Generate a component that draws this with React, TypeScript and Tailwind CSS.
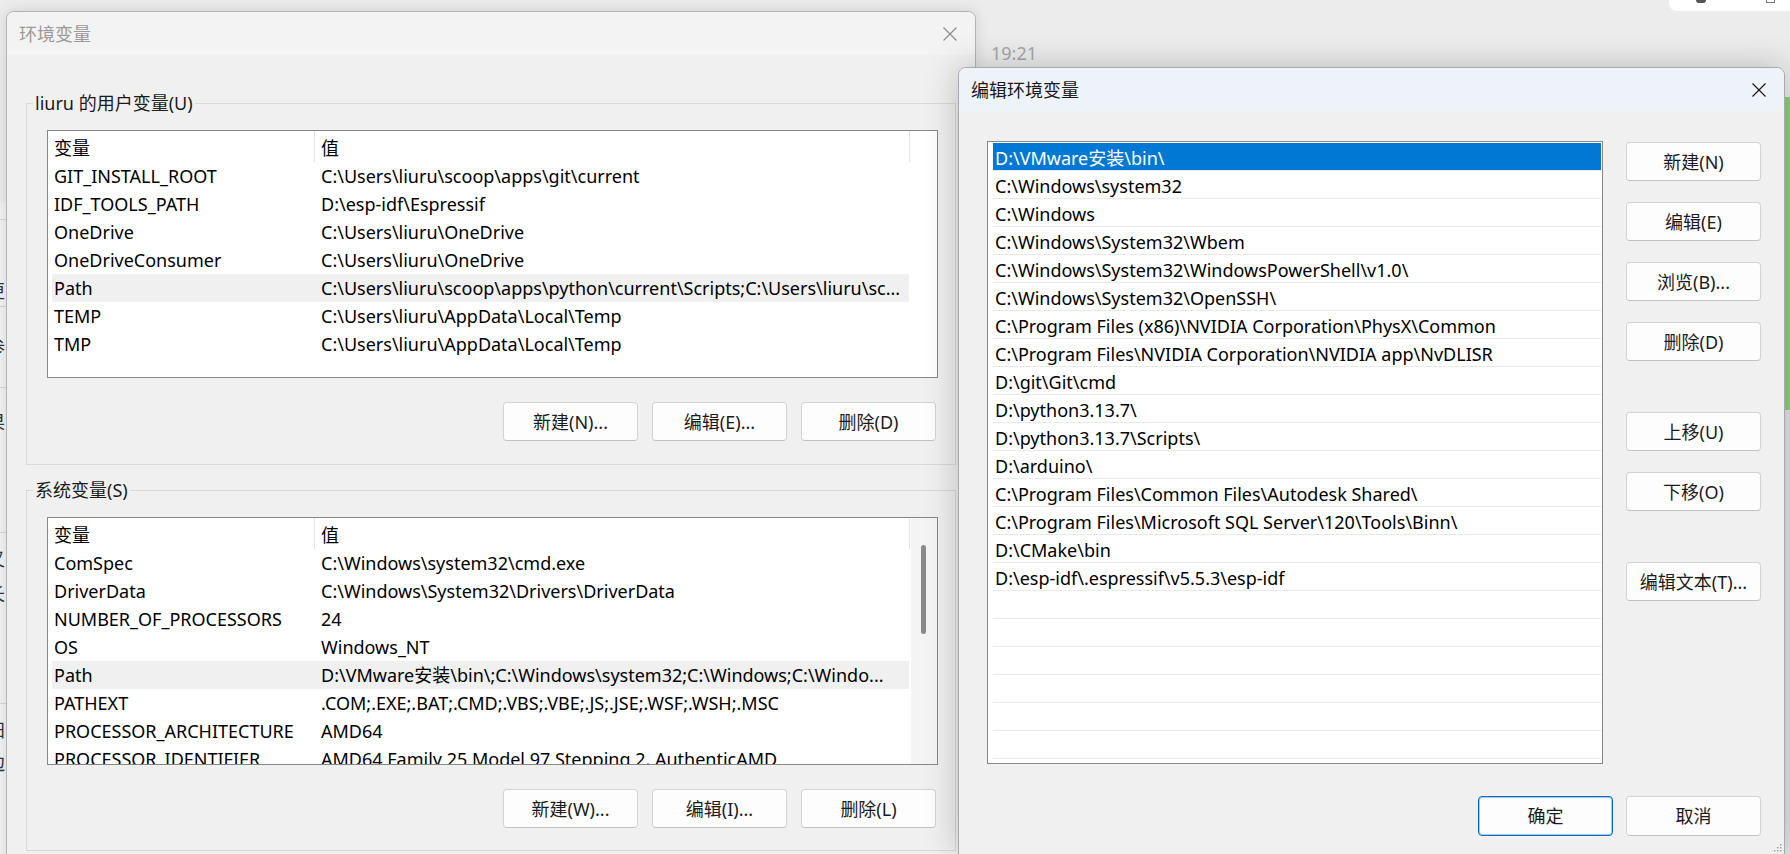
import clsx from 'clsx';
import type { ReactNode } from 'react';

type Row = [string, string];

const userVars: Row[] = [
  ['GIT_INSTALL_ROOT', 'C:\\Users\\liuru\\scoop\\apps\\git\\current'],
  ['IDF_TOOLS_PATH', 'D:\\esp-idf\\Espressif'],
  ['OneDrive', 'C:\\Users\\liuru\\OneDrive'],
  ['OneDriveConsumer', 'C:\\Users\\liuru\\OneDrive'],
  ['Path', 'C:\\Users\\liuru\\scoop\\apps\\python\\current\\Scripts;C:\\Users\\liuru\\sc...'],
  ['TEMP', 'C:\\Users\\liuru\\AppData\\Local\\Temp'],
  ['TMP', 'C:\\Users\\liuru\\AppData\\Local\\Temp'],
];

const sysVars: Row[] = [
  ['ComSpec', 'C:\\Windows\\system32\\cmd.exe'],
  ['DriverData', 'C:\\Windows\\System32\\Drivers\\DriverData'],
  ['NUMBER_OF_PROCESSORS', '24'],
  ['OS', 'Windows_NT'],
  ['Path', 'D:\\VMware安装\\bin\\;C:\\Windows\\system32;C:\\Windows;C:\\Windo...'],
  ['PATHEXT', '.COM;.EXE;.BAT;.CMD;.VBS;.VBE;.JS;.JSE;.WSF;.WSH;.MSC'],
  ['PROCESSOR_ARCHITECTURE', 'AMD64'],
  ['PROCESSOR_IDENTIFIER', 'AMD64 Family 25 Model 97 Stepping 2, AuthenticAMD'],
];

const pathEntries = [
  'D:\\VMware安装\\bin\\',
  'C:\\Windows\\system32',
  'C:\\Windows',
  'C:\\Windows\\System32\\Wbem',
  'C:\\Windows\\System32\\WindowsPowerShell\\v1.0\\',
  'C:\\Windows\\System32\\OpenSSH\\',
  'C:\\Program Files (x86)\\NVIDIA Corporation\\PhysX\\Common',
  'C:\\Program Files\\NVIDIA Corporation\\NVIDIA app\\NvDLISR',
  'D:\\git\\Git\\cmd',
  'D:\\python3.13.7\\',
  'D:\\python3.13.7\\Scripts\\',
  'D:\\arduino\\',
  'C:\\Program Files\\Common Files\\Autodesk Shared\\',
  'C:\\Program Files\\Microsoft SQL Server\\120\\Tools\\Binn\\',
  'D:\\CMake\\bin',
  'D:\\esp-idf\\.espressif\\v5.5.3\\esp-idf',
  '', '', '', '', '', '',
];

// bits of the window lying behind, only its right edge shows
const behindGlyphs = [
  { ch: '更', top: 'top-[75px]' },
  { ch: '参', top: 'top-[131px]' },
  { ch: '果', top: 'top-[206px]' },
  { ch: '又', top: 'top-[343px]' },
  { ch: '长', top: 'top-[378px]' },
  { ch: '阳', top: 'top-[514px]' },
  { ch: '边', top: 'top-[547px]' },
];

function CloseIcon({ className }: { className?: string }) {
  return (
    <svg viewBox="0 0 16 16" className={clsx('h-[16px] w-[16px] shrink-0', className)} fill="none" stroke="currentColor" strokeWidth={1.2}>
      <path d="M1.5 1.5l13 13M14.5 1.5l-13 13" />
    </svg>
  );
}

function Button({ children, primary, className }: { children: ReactNode; primary?: boolean; className?: string }) {
  return (
    <button
      type="button"
      className={clsx(
        'flex h-[39px] w-[135px] shrink-0 items-center justify-center rounded-[4px] border bg-[#fdfdfd] leading-none text-[#1b1b1b]',
        primary ? 'border-[#0067c0] shadow-[inset_0_0_0_1px_rgba(0,103,192,0.35)]' : 'border-[#d3d3d3] border-b-[#c2c2c2]',
        className,
      )}
    >
      {children}
    </button>
  );
}

function VarList({ rows, selected, scrollbar }: { rows: Row[]; selected: string; scrollbar?: boolean }) {
  return (
    <div className="flex h-[248px] w-[891px] overflow-hidden border border-[#878787] bg-white">
      <div className="min-w-0 flex-1">
        <div className="flex h-[31px] pl-[4px]">
          <div className="w-[262px] shrink-0 pl-[2px] pt-[3px] leading-[28px]">变量</div>
          <div className="w-[595px] shrink-0 border-l border-[#e3e3e3] pl-[6px] pt-[3px] leading-[28px]">值</div>
          <div className="flex-1 border-l border-[#e3e3e3]" />
        </div>
        {rows.map(([name, value]) => (
          <div key={name} className={clsx('ml-[4px] flex h-[28px] w-[857px] leading-[28px]', name === selected && 'bg-[#f0f0f0]')}>
            <div className="w-[262px] shrink-0 overflow-hidden whitespace-nowrap pl-[2px]">{name}</div>
            <div className="w-[595px] shrink-0 overflow-hidden whitespace-nowrap pl-[7px]">{value}</div>
          </div>
        ))}
      </div>
      {scrollbar && (
        <div className="w-[26px] shrink-0 bg-[#f4f4f4]">
          <div className="ml-[10px] mt-[27px] h-[89px] w-[5px] rounded-full bg-[#8a8a8a]" />
        </div>
      )}
    </div>
  );
}

function GroupBox({ label, className, children }: { label: string; className?: string; children: ReactNode }) {
  return (
    <fieldset className={clsx('border border-[#d9d9d9] pl-[6px] pt-[14px]', className)}>
      <legend className="px-[2px] leading-[26px] text-[#1b1b1b]">{label}</legend>
      <div className="ml-[14px]">{children}</div>
    </fieldset>
  );
}

function ButtonRow({ labels }: { labels: string[] }) {
  return (
    <div className="mt-[24px] flex w-[891px] justify-end gap-[14px] pr-[2px]">
      {labels.map((l) => (
        <Button key={l}>{l}</Button>
      ))}
    </div>
  );
}

export default function App() {
  return (
    <div className="relative h-[854px] w-[1790px] overflow-hidden bg-[#ececec] font-['Noto_Sans','Noto_Sans_CJK_SC',sans-serif] text-[18px] text-black">
      {/* window behind on the left edge */}
      <div className="absolute left-0 top-[203px] h-[651px] w-[6px] overflow-hidden bg-[#f2f2f2]">
        <div className="h-[17px] border-b border-[#d6d6d6]" />
        <div className="mt-[86px] border-b border-[#d6d6d6]" />
        <div className="mt-[80px] border-b border-[#d6d6d6]" />
        <div className="mt-[144px] border-b border-[#d6d6d6]" />
        <div className="mt-[170px] border-b border-[#d6d6d6]" />
        {behindGlyphs.map((g) => (
          <span key={g.ch} className={clsx('absolute left-[-13px] leading-[26px] text-[#333]', g.top)}>{g.ch}</span>
        ))}
      </div>

      {/* desktop bits */}
      <span className="absolute left-[991px] top-[40px] leading-[26px] text-[#a6a6a6]">19:21</span>
      <div className="absolute right-0 top-0 flex h-[11px] w-[121px] items-start gap-[60px] rounded-bl-[8px] bg-white pl-[27px]">
        <div className="h-[3px] w-[10px] rounded-b-full bg-[#555]" />
        <div className="h-[3px] w-[9px] border-x border-b border-[#777]" />
      </div>
      <div className="absolute left-[1785px] top-[97px] h-[313px] w-[5px] bg-[#8fd080]" />
      <div className="absolute left-[1785px] top-[410px] h-[444px] w-[5px] bg-[#e2e4e8]" />

      {/* 环境变量 */}
      <div className="absolute left-[6px] top-[11px] h-[870px] w-[970px] rounded-t-[8px] border border-[#b4b4b4] bg-[#f0f0f0] shadow-[0_0_14px_rgba(0,0,0,0.12)]">
        <div className="flex h-[43px] items-center justify-between rounded-t-[7px] bg-[#f3f3f3] pl-[12px] pr-[17px]">
          <span className="leading-[26px] text-[#9a9a9a]">环境变量</span>
          <CloseIcon className="text-[#8c8c8c]" />
        </div>
        <div className="px-[19px] pt-[35px]">
          <GroupBox label="liuru 的用户变量(U)" className="pb-[23px]">
            <VarList rows={userVars} selected="Path" />
            <ButtonRow labels={['新建(N)...', '编辑(E)...', '删除(D)']} />
          </GroupBox>
          <GroupBox label="系统变量(S)" className="mt-[12px] pb-[22px]">
            <VarList rows={sysVars} selected="Path" scrollbar />
            <ButtonRow labels={['新建(W)...', '编辑(I)...', '删除(L)']} />
          </GroupBox>
        </div>
      </div>

      {/* 编辑环境变量 */}
      <div className="absolute left-[958px] top-[67px] h-[788px] w-[827px] rounded-t-[8px] border border-[#a9a9a9] bg-[#f0f0f0] shadow-[0_0_34px_rgba(0,0,0,0.22)]">
        <div className="flex h-[43px] items-center justify-between rounded-t-[7px] bg-[#eef2f9] pl-[12px] pr-[17px]">
          <span className="leading-[26px] text-[#1a1a1a]">编辑环境变量</span>
          <CloseIcon className="text-[#1a1a1a]" />
        </div>
        <div className="pl-[28px] pr-[23px] pt-[30px]">
          <div className="flex gap-[23px]">
            <div className="h-[623px] w-[616px] shrink-0 overflow-hidden border border-[#878787] bg-white pl-[5px] pr-[1px] pt-[1px]">
              {pathEntries.map((p, i) => (
                <div
                  key={i}
                  className={clsx(
                    'h-[28px] overflow-hidden whitespace-nowrap border-b border-[#e9e9e9] pl-[2px] leading-[30px]',
                    i === 0 && 'bg-[#0078d4] text-white',
                  )}
                >
                  {p}
                </div>
              ))}
            </div>
            <div className="flex w-[135px] flex-col pt-[1px]">
              <Button>新建(N)</Button>
              <Button className="mt-[21px]">编辑(E)</Button>
              <Button className="mt-[21px]">浏览(B)...</Button>
              <Button className="mt-[21px]">删除(D)</Button>
              <Button className="mt-[51px]">上移(U)</Button>
              <Button className="mt-[21px]">下移(O)</Button>
              <Button className="mt-[51px]">编辑文本(T)...</Button>
            </div>
          </div>
          <div className="mt-[32px] flex justify-end gap-[13px]">
            <Button primary className="h-[40px]">确定</Button>
            <Button className="h-[40px]">取消</Button>
          </div>
        </div>
        <svg viewBox="0 0 8 8" className="absolute bottom-[2px] right-[2px] h-[8px] w-[8px] text-[#9a9a9a]" fill="currentColor">
          <rect x="6" y="0" width="1.4" height="1.4" />
          <rect x="3" y="3" width="1.4" height="1.4" />
          <rect x="6" y="3" width="1.4" height="1.4" />
          <rect x="0" y="6" width="1.4" height="1.4" />
          <rect x="3" y="6" width="1.4" height="1.4" />
          <rect x="6" y="6" width="1.4" height="1.4" />
        </svg>
      </div>
    </div>
  );
}
